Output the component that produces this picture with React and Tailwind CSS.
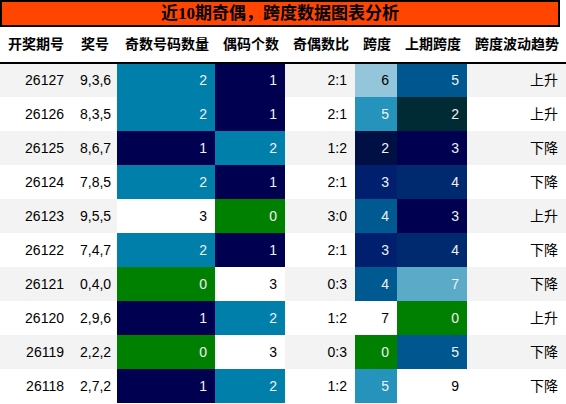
import React from "react";

// 奇偶 / 跨度 heat table
const rows = [
  ["26127", "9,3,6", 2, 1, "2:1", 6, 5, "上升"],
  ["26126", "8,3,5", 2, 1, "2:1", 5, 2, "上升"],
  ["26125", "8,6,7", 1, 2, "1:2", 2, 3, "下降"],
  ["26124", "7,8,5", 2, 1, "2:1", 3, 4, "下降"],
  ["26123", "9,5,5", 3, 0, "3:0", 4, 3, "上升"],
  ["26122", "7,4,7", 2, 1, "2:1", 3, 4, "下降"],
  ["26121", "0,4,0", 0, 3, "0:3", 4, 7, "下降"],
  ["26120", "2,9,6", 1, 2, "1:2", 7, 0, "上升"],
  ["26119", "2,2,2", 0, 3, "0:3", 0, 5, "下降"],
  ["26118", "2,7,2", 1, 2, "1:2", 5, 9, "下降"],
];

const oddEven = {
  0: "bg-[#008000] text-[#f1f1f1]",
  1: "bg-[#000050] text-[#f1f1f1]",
  2: "bg-[#007faa] text-[#f1f1f1]",
  3: "bg-white text-black",
};

const span = {
  0: "bg-[#008000] text-[#f1f1f1]",
  2: "bg-[#001045] text-[#f1f1f1]",
  3: "bg-[#00206f] text-[#f1f1f1]",
  4: "bg-[#005a92] text-[#f1f1f1]",
  5: "bg-[#2593bb] text-[#f1f1f1]",
  6: "bg-[#93c6da] text-black",
  7: "bg-white text-black",
};

const lastSpan = {
  0: "bg-[#008000] text-[#f1f1f1]",
  2: "bg-[#002b35] text-[#f1f1f1]",
  3: "bg-[#000050] text-[#f1f1f1]",
  4: "bg-[#002a70] text-[#f1f1f1]",
  5: "bg-[#00578f] text-[#f1f1f1]",
  7: "bg-[#5aaac8] text-[#f1f1f1]",
  9: "bg-white text-black",
};

const headers = ["开奖期号", "奖号", "奇数号码数量", "偶码个数", "奇偶数比", "跨度", "上期跨度", "跨度波动趋势"];
const widths = [72, 45, 98, 70, 70, 42, 70, 99];

const App = () => {
  return (
    <div className="w-[566px] h-[404px] bg-white overflow-hidden text-black font-['Liberation_Sans','Noto_Sans_CJK_SC',sans-serif]">
      {/* Title */}
      <div className="w-[560px] h-[27px] bg-[#ff4500] border-2 border-black flex items-center justify-center">
        <h1 className="text-[17px] font-bold leading-none font-['Liberation_Serif','Noto_Sans_CJK_SC',serif]">
          近10期奇偶，跨度数据图表分析
        </h1>
      </div>

      <table className="table-fixed border-collapse w-[566px] text-[14px]">
        <colgroup>
          {widths.map((w, i) => (
            <col key={i} style={{ width: w }} />
          ))}
        </colgroup>
        <thead>
          <tr className="h-[36px] border-b-2 border-black">
            {headers.map((h) => (
              <th key={h} className="px-2 text-right font-bold whitespace-nowrap">
                {h}
              </th>
            ))}
          </tr>
        </thead>
        <tbody>
          {rows.map((r, i) => (
            <tr key={r[0]} className={i % 2 === 0 ? "h-[34px] bg-[#f3f3f3]" : "h-[34px] bg-white"}>
              <td className="px-2 text-right">{r[0]}</td>
              <td className="px-2 text-right">{r[1]}</td>
              <td className={"px-2 text-right " + oddEven[r[2]]}>{r[2]}</td>
              <td className={"px-2 text-right " + oddEven[r[3]]}>{r[3]}</td>
              <td className="px-2 text-right">{r[4]}</td>
              <td className={"px-2 text-right " + span[r[5]]}>{r[5]}</td>
              <td className={"px-2 text-right " + lastSpan[r[6]]}>{r[6]}</td>
              <td className="px-2 text-right">{r[7]}</td>
            </tr>
          ))}
        </tbody>
      </table>
    </div>
  );
};

export default App;
